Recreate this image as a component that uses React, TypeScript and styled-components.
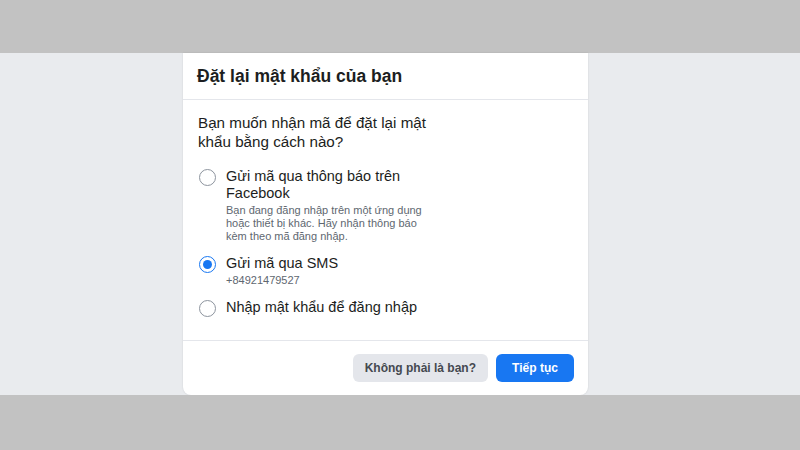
import React, { useState } from "react";
import styled, { createGlobalStyle } from "styled-components";

const GlobalStyle = createGlobalStyle`
  html, body {
    margin: 0;
    padding: 0;
    background: #c2c2c2;
    font-family: "Liberation Sans", Arial, sans-serif;
  }
`;

const Band = styled.div`
  height: 53px;
  background: #c2c2c2;
`;

const Stage = styled.div`
  height: 342px;
  background: #e9ebee;
  padding-left: 183px;
  box-sizing: border-box;
`;

const Card = styled.div`
  width: 405px;
  height: 342px;
  background: #fff;
  border-radius: 0 0 8px 8px;
  box-shadow: 0 0 2px rgba(0, 0, 0, 0.12);
  display: flex;
  flex-direction: column;
`;

const Header = styled.div`
  height: 46px;
  padding: 0 14px;
  display: flex;
  align-items: center;
  border-bottom: 1px solid #e4e6eb;
`;

const Title = styled.h2`
  margin: 0;
  font-size: 17.5px;
  font-weight: bold;
  color: #1c1e21;
`;

const Body = styled.div`
  flex: 1;
  padding: 13px 15px 0;
  border-bottom: 1px solid #e4e6eb;
`;

const Question = styled.p`
  margin: 0 0 17px;
  width: 232px;
  font-size: 15.2px;
  line-height: 19px;
  color: #1c1e21;
`;

const Options = styled.div`
  display: flex;
  flex-direction: column;
  gap: 12px;
`;

const Option = styled.label`
  display: flex;
  align-items: flex-start;
  gap: 10px;
  cursor: pointer;
`;

const Radio = styled.span<{ $checked: boolean }>`
  flex: none;
  width: 17px;
  height: 17px;
  margin-top: 1px;
  margin-left: 1px;
  box-sizing: border-box;
  border-radius: 50%;
  border: 1.5px solid ${(p) => (p.$checked ? "#1877f2" : "#8d949e")};
  display: flex;
  align-items: center;
  justify-content: center;
  &::after {
    content: "";
    width: 9px;
    height: 9px;
    border-radius: 50%;
    background: ${(p) => (p.$checked ? "#1877f2" : "transparent")};
  }
`;

const OptionText = styled.div`
  width: 210px;
`;

const OptionLabel = styled.div`
  width: 200px;
  font-size: 14.5px;
  line-height: 17px;
  color: #1c1e21;
`;

const OptionNote = styled.div`
  margin-top: 2px;
  width: 204px;
  font-size: 11px;
  line-height: 13px;
  color: #606770;
`;

const Footer = styled.div`
  height: 54px;
  padding: 0 14px 0 0;
  box-sizing: border-box;
  display: flex;
  justify-content: flex-end;
  align-items: center;
  gap: 8px;
`;

const Button = styled.button<{ $primary?: boolean }>`
  height: 28px;
  padding: 0 12px;
  border: none;
  border-radius: 6px;
  font-family: "Liberation Sans", Arial, sans-serif;
  font-size: 12px;
  font-weight: bold;
  background: ${(p) => (p.$primary ? "#1877f2" : "#e4e6eb")};
  color: ${(p) => (p.$primary ? "#fff" : "#444950")};
  min-width: ${(p) => (p.$primary ? "78px" : "auto")};
  cursor: pointer;
`;

const options = [
  {
    label: "Gửi mã qua thông báo trên Facebook",
    note: "Bạn đang đăng nhập trên một ứng dụng hoặc thiết bị khác. Hãy nhận thông báo kèm theo mã đăng nhập.",
  },
  { label: "Gửi mã qua SMS", note: "+84921479527" },
  { label: "Nhập mật khẩu để đăng nhập" },
];

export default function App() {
  const [selected, setSelected] = useState(1);
  return (
    <>
      <GlobalStyle />
      <Band />
      <Stage>
        <Card>
          <Header>
            <Title>Đặt lại mật khẩu của bạn</Title>
          </Header>
          <Body>
            <Question>Bạn muốn nhận mã để đặt lại mật khẩu bằng cách nào?</Question>
            <Options>
              {options.map((o, i) => (
                <Option key={i} onClick={() => setSelected(i)}>
                  <Radio $checked={selected === i} />
                  <OptionText>
                    <OptionLabel>{o.label}</OptionLabel>
                    {o.note && <OptionNote>{o.note}</OptionNote>}
                  </OptionText>
                </Option>
              ))}
            </Options>
          </Body>
          <Footer>
            <Button>Không phải là bạn?</Button>
            <Button $primary>Tiếp tục</Button>
          </Footer>
        </Card>
      </Stage>
      <Band />
    </>
  );
}
